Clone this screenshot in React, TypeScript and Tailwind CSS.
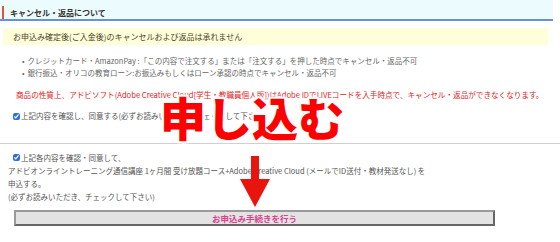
import React from 'react';

export default function App() {
  return (
    <div className="relative w-[560px] h-[242px] overflow-hidden bg-white font-['Noto_Sans_CJK_JP',sans-serif] text-[#555]">
      {/* Section header */}
      <div className="mr-[7px] h-[21px] bg-[#ecfbfd] border-b-2 border-[#6a8fdc] pt-[6px] pl-[2px]">
        <div className="border-l-2 border-[#e0543a] pl-[6px] text-[8px] leading-[13px] font-bold text-[#333]">
          キャンセル・返品について
        </div>
      </div>

      {/* Notice box */}
      <div className="mt-[7px] ml-[3px] w-[545px] h-[17px] bg-[#fefed9] pl-[10px] text-[8px] leading-[17px] text-[#4a3f2a]">
        お申込み確定後(ご入金後)のキャンセルおよび返品は承れません
      </div>

      <ul className="mt-[10px] pl-[22px] text-[7.5px] leading-[11.5px] text-[#666]">
        <li className="flex gap-[3px]"><span>•</span><span>クレジットカード・AmazonPay :「この内容で注文する」または「注文する」を押した時点でキャンセル・返品不可</span></li>
        <li className="flex gap-[3px]"><span>•</span><span>銀行振込・オリコの教育ローン:お振込みもしくはローン承認の時点でキャンセル・返品不可</span></li>
      </ul>

      <p className="mt-[11px] pl-[16px] text-[7.6px] leading-[12px] text-[#e0241c] whitespace-nowrap">
        商品の性質上、アドビソフト(Adobe Creative Cloud[学生・教職員個人版])はAdobe IDでLIVEコードを入手時点で、キャンセル・返品ができなくなります。
      </p>

      <label className="mt-[9px] ml-[13px] flex items-center gap-[1px] text-[7.5px] leading-[12px] text-[#555]">
        <input type="checkbox" defaultChecked className="w-[7px] h-[7px] m-0 accent-[#2f6fd6]" />
        上記内容を確認し、同意する(必ずお読みいただき、チェックして下さい)
      </label>

      <div className="mt-[21px] h-px bg-[#cfcfcf]" />

      <div className="mt-[7px] pl-[8px] text-[7.5px] leading-[13px] text-[#555]">
        <label className="ml-[5px] flex items-center gap-[1px]">
          <input type="checkbox" defaultChecked className="w-[7px] h-[7px] m-0 accent-[#2f6fd6]" />
          上記各内容を確認・同意して、
        </label>
        <div>アドビオンライントレーニング通信講座 1ヶ月間 受け放題コース+Adobe Creative Cloud (メールでID送付・教材発送なし) を</div>
        <div>申込する。</div>
        <div>(必ずお読みいただき、チェックして下さい)</div>
      </div>

      <button className="mt-[4px] ml-[14px] w-[481px] h-[16px] bg-[#e3e3e3] border-2 border-t-[#9a9a9a] border-l-[#9a9a9a] border-b-[#666] border-r-[#666] text-[8.5px] leading-[12px] font-bold text-[#dc3f8e]">
        お申込み手続きを行う
      </button>

      {/* Overlay callout */}
      <div className="absolute left-[160px] top-[88px] text-[46px] leading-[56px] font-black text-[#ff0000] [text-shadow:2px_2px_1px_#fff,-2px_-2px_1px_#fff,2px_-2px_1px_#fff,-2px_2px_1px_#fff,0_0_4px_#fff,0_0_4px_#fff]">
        申し込む
      </div>
      <svg className="absolute left-[239px] top-[156px]" width="32" height="52" viewBox="0 0 32 52">
        <rect x="12" y="0" width="8" height="26" fill="#e8140e" />
        <polygon points="1,23 31,23 16,51" fill="#e8140e" />
      </svg>
    </div>
  );
}
